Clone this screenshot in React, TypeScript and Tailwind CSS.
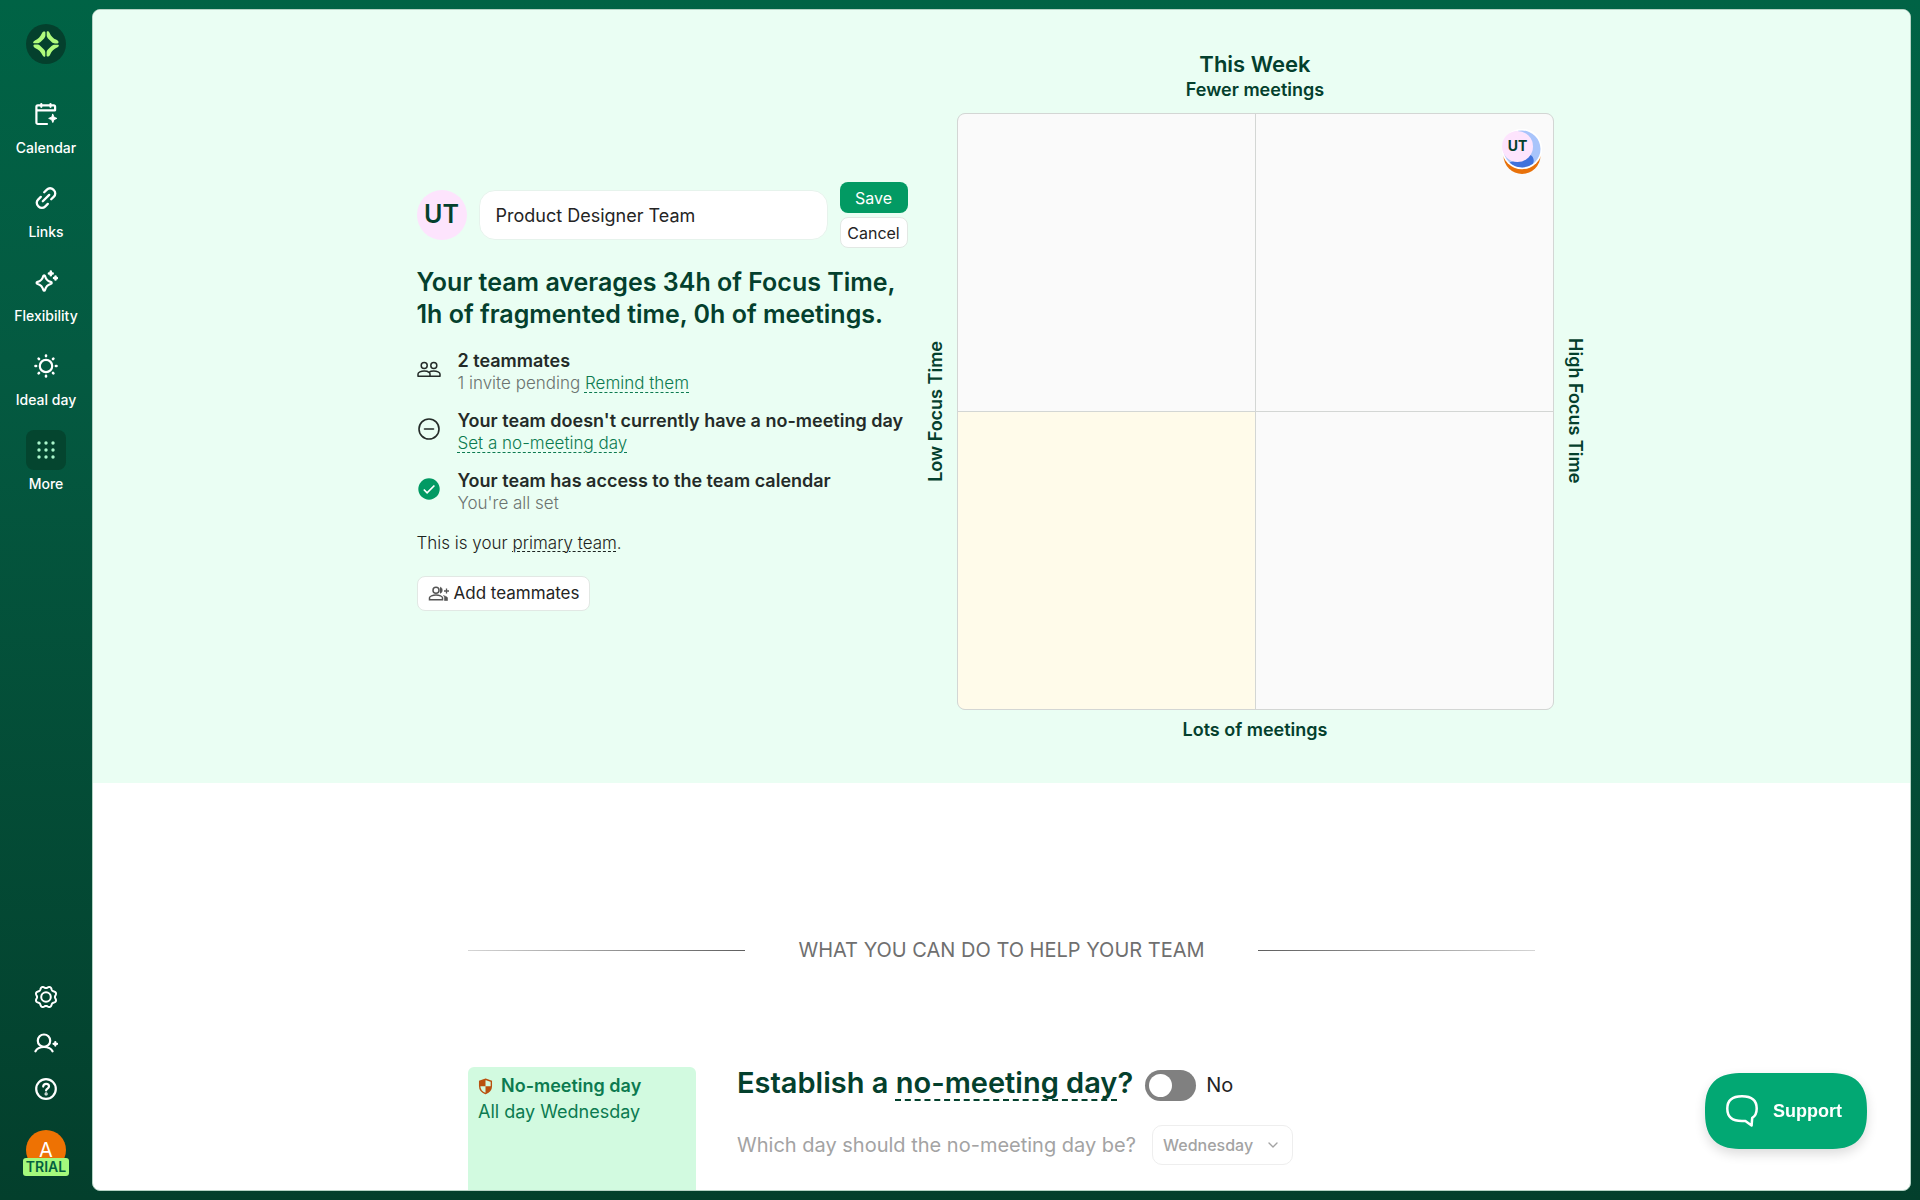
import { useState } from "react";
import { ChevronDown } from "lucide-react";

const navItems = [
  { label: "Calendar", icon: CalendarIcon },
  { label: "Links", icon: LinksIcon },
  { label: "Flexibility", icon: FlexibilityIcon },
  { label: "Ideal day", icon: SunIcon },
  { label: "More", icon: DotsIcon, active: true },
];

const days = ["Monday", "Tuesday", "Wednesday", "Thursday", "Friday"];

function Logo() {
  return (
    <svg viewBox="0 0 40 40" className="size-10">
      <circle cx="20" cy="20" r="20" fill="#04402d" />
      <g fill="#b0fb7c">
        {[0, 90, 180, 270].map((angle) => (
          <path
            key={angle}
            transform={`rotate(${angle} 20 20)`}
            d="M19.4 8.600v2.400c0 1.400-.3 2.300-1.300 3.400l-3.600 3.600c-1.100 1-2 1.300-3.400 1.300H8.400c-1 0-1.500-.5-1.100-1.300.3-.8.800-1.200 1.600-1.600 3.200-1.400 5.400-3.500 6.900-6.900.4-.9.900-1.500 1.800-1.900.9-.4 1.800 0 1.800 1z"
          />
        ))}
      </g>
    </svg>
  );
}

function CalendarIcon() {
  return (
    <svg viewBox="0 0 24 24" className="size-6" fill="none" stroke="currentColor" strokeWidth="2.200" strokeLinecap="round" strokeLinejoin="round">
      <path d="M13 22H3.800a1.400 1.400 0 0 1-1.400-1.400V4.800a1.400 1.400 0 0 1 1.400-1.400h15.900a1.400 1.400 0 0 1 1.400 1.400V8.300H2.500M7.300 2v2.800M16.500 2v2.800" />
      <path d="M18.800 12.300l1.200 2.900 2.900 1.200-2.900 1.200-1.200 2.900-1.200-2.900-2.900-1.200 2.900-1.200z" fill="currentColor" strokeWidth="1" />
    </svg>
  );
}

function LinksIcon() {
  return (
    <svg viewBox="0 0 24 24" className="size-6" fill="none" stroke="currentColor" strokeWidth="2.300" strokeLinecap="round">
      <path d="M10.200 6.300l2.700-2.700a4.500 4.500 0 0 1 6.400 0l.6.600a4.500 4.500 0 0 1 0 6.400l-2.700 2.700" />
      <path d="M13.800 17.900l-2.700 2.700a4.500 4.500 0 0 1-6.400 0l-.6-.6a4.500 4.500 0 0 1 0-6.400l2.700-2.700" />
      <path d="M8.800 15.300l6.400-6.400" />
    </svg>
  );
}

function FlexibilityIcon() {
  return (
    <svg viewBox="0 0 24 24" className="size-6" fill="none" stroke="currentColor" strokeWidth="2.200" strokeLinejoin="round" strokeLinecap="round">
      <path d="M10.200 5.300c.5 0 .7.300.9.900.9 3.300 2.200 4.700 5.500 5.700 1.500.5 1.500 1.700 0 2.100-3.300 1-4.600 2.300-5.500 5.600-.4 1.500-1.400 1.500-1.900 0-.9-3.300-2.200-4.600-5.500-5.600-1.500-.4-1.500-1.600 0-2.100 3.300-1 4.600-2.400 5.500-5.700.200-.6.500-.9 1-.9z" />
      <path strokeWidth="2.500" d="M16.800 1.500v3.800M14.900 3.400h3.800M21.500 6.600v3M20 8.100h3" />
    </svg>
  );
}

function SunIcon() {
  return (
    <svg viewBox="0 0 24 24" className="size-6" fill="none" stroke="currentColor" strokeWidth="2.200" strokeLinecap="round">
      <circle cx="12" cy="12" r="6.200" />
      <path strokeWidth="2.600" d="M12 1.500v.6M12 21.900v.6M1.500 12h.6M21.900 12h.6M4.600 4.600l.4.400M19 19l.4.400M4.600 19.400l.4-.4M19 5l.4-.4" />
    </svg>
  );
}

function DotsIcon() {
  return (
    <svg viewBox="0 0 24 24" className="size-6 text-[#a9f5cb]" fill="currentColor">
      {[5, 12, 19].map((y) => [5, 12, 19].map((x) => <circle key={`${x}-${y}`} cx={x} cy={y} r="1.700" />))}
    </svg>
  );
}

// eight rounded teeth around a ring, with a notch at the top
const gearPoints = Array.from({ length: 96 }, (_, i) => {
  const angle = (i / 96) * Math.PI * 2;
  const radius = 9.800 - Math.cos(angle * 8) * 0.900;
  return `${(12 + Math.sin(angle) * radius).toFixed(2)},${(12 - Math.cos(angle) * radius).toFixed(2)}`;
}).join(" ");

function GearIcon() {
  return (
    <svg viewBox="0 0 24 24" className="size-6" fill="none" stroke="currentColor" strokeWidth="2" strokeLinejoin="round">
      <circle cx="12" cy="12" r="4.800" />
      <polygon points={gearPoints} />
    </svg>
  );
}

function InviteIcon() {
  return (
    <svg viewBox="0 0 24 24" className="size-6" fill="none" stroke="currentColor" strokeWidth="2.200" strokeLinecap="round">
      <circle cx="10" cy="9.700" r="6.200" />
      <path d="M1.500 20.300c1.200-2.500 4.500-4.300 8.500-4.300s7.300 1.800 8.500 4.300M21.300 11v3.600M19.500 12.800h3.600" />
    </svg>
  );
}

function HelpIcon() {
  return (
    <svg viewBox="0 0 24 24" className="size-6" fill="none" stroke="currentColor" strokeWidth="2.200" strokeLinecap="round">
      <circle cx="12" cy="12" r="9.800" />
      <path d="M9.200 9.600c0-1.600 1.200-2.700 2.900-2.700s2.900 1 2.900 2.500c0 2-2.900 2.200-2.900 4" />
      <circle cx="12.100" cy="16.900" r=".5" fill="currentColor" />
    </svg>
  );
}

function TeamIcon() {
  return (
    <svg viewBox="0 0 24 24" className="size-6" fill="none" stroke="#242b28" strokeWidth="1.500" strokeLinejoin="round">
      <circle cx="7.200" cy="8.500" r="3" />
      <circle cx="16.800" cy="8.500" r="3" />
      <path d="M1 19.200v-2.300c0-1.500 3-2.900 6.200-2.900 2 0 3.800.5 4.800 1.300 1-.8 2.800-1.300 4.800-1.300 3.200 0 6.200 1.400 6.200 2.900v2.300zM12 15.300c.7.500 1 1 1 1.600v2.300" />
    </svg>
  );
}

function MinusCircleIcon() {
  return (
    <svg viewBox="0 0 24 24" className="size-6" fill="none" stroke="#242b28" strokeWidth="1.600" strokeLinecap="round">
      <circle cx="12" cy="12" r="10" />
      <path d="M7.500 12h9" />
    </svg>
  );
}

function CheckCircleIcon() {
  return (
    <svg viewBox="0 0 24 24" className="size-6" fill="none">
      <circle cx="12" cy="12" r="10.700" fill="#029a63" />
      <path d="M6.800 12.500l3.300 3.300L17.400 8.500" stroke="#fff" strokeWidth="1.700" />
    </svg>
  );
}

function AddTeamIcon() {
  return (
    <svg viewBox="0 0 22 18" className="h-[18px] w-[22px]" fill="none" stroke="#555" strokeWidth="1.500">
      <circle cx="8" cy="5.200" r="3" />
      <path d="M1.500 14.800v-2c0-1.500 3.200-2.700 6.500-2.700s6.500 1.200 6.500 2.700v2z" />
      <path d="M12 2.200c3 0 3 6 0 6M15.500 10.500c1.500.6 3.500 1.200 4 2.300v2.700h-3v-2.700c0-.9-.3-1.600-1-2.300z" fill="#555" strokeWidth=".6" />
      <path d="M18.500 3.500v5M16 6h5" strokeWidth="1.300" />
    </svg>
  );
}

function ShieldIcon() {
  return (
    <svg viewBox="0 0 14 16" className="h-[17px] w-[15px]">
      <path d="M7 1.200l5.500 1.900v4.500c0 3.500-2.300 5.900-5.500 7.100-3.200-1.200-5.500-3.600-5.500-7.100V3.100z" fill="none" stroke="#b9500f" strokeWidth="1.300" />
      <path d="M7 1.200v6.600H1.500V3.100zM7 7.800h5.500c0 3.400-2.300 5.700-5.500 6.900z" fill="#b9500f" />
    </svg>
  );
}

function TeamBadge() {
  return (
    <svg viewBox="0 0 42 46" className="h-[46px] w-[42px]">
      <circle cx="21" cy="26.500" r="18.500" fill="#e8710a" />
      <circle cx="21" cy="20" r="20.200" fill="#fff" />
      <circle cx="21" cy="20" r="18.500" fill="#a8c4fb" />
      <path d="M8.500 33.500a18.500 18.500 0 0 0 23.500 1.300c1.500-3 .6-7.300-2.500-8.800z" fill="#3f72dc" />
      <circle cx="16.500" cy="17.500" r="15.500" fill="#fde4fd" />
      <text x="16.500" y="22" textAnchor="middle" fontSize="14" fontWeight="700" fill="#04402d">
        UT
      </text>
    </svg>
  );
}

function ChatIcon() {
  return (
    <svg viewBox="0 0 34 34" className="size-[34px]" fill="none" stroke="#fff" strokeWidth="2.500" strokeLinejoin="round">
      <path d="M17 2.200c9.800 0 14.700 3.500 14.700 12.300 0 4.700-1.300 7.600-4.500 9.300l-.6 7.800-6.200-4.500c-1.100-.2-2.200-.1-3.400-.1C7.200 27 2.300 23.200 2.300 14.500S7.200 2.200 17 2.200z" />
    </svg>
  );
}

function Sidebar() {
  return (
    <aside className="flex w-[92px] shrink-0 flex-col items-center text-white">
      <a href="#home" aria-label="Home" className="mt-6">
        <Logo />
      </a>
      <nav className="mt-[30px] flex flex-col items-center gap-5">
        {navItems.map((item) => (
          <a key={item.label} href="#nav" className="flex flex-col items-center gap-1 text-sm/5 font-medium">
            <span className={`flex size-10 items-center justify-center rounded-lg ${item.active ? "bg-[#04452f]" : ""}`}>
              <item.icon />
            </span>
            {item.label}
          </a>
        ))}
      </nav>
      <div className="mt-auto flex flex-col items-center gap-[22px]">
        <button type="button" aria-label="Settings"><GearIcon /></button>
        <button type="button" aria-label="Invite"><InviteIcon /></button>
        <button type="button" aria-label="Help"><HelpIcon /></button>
      </div>
      <button type="button" className="mt-[29px] mb-6 flex flex-col items-center">
        <span className="flex size-10 items-center justify-center rounded-full bg-[#ee7203] text-xl">A</span>
        <span className="-mt-3 rounded-[3px] bg-[#a5f97c] px-[3px] text-sm/[18px] font-semibold text-[#04603f]">TRIAL</span>
      </button>
    </aside>
  );
}

const linkClass = "text-[#0c7a50] underline decoration-dashed decoration-1 underline-offset-3";

function TeamSummary() {
  const [name, setName] = useState("Product Designer Team");

  return (
    <div className="w-[491px]">
      <div className="flex items-center">
        <div className="flex size-[50px] shrink-0 items-center justify-center rounded-full bg-[#fde4fd] text-[25px] font-semibold text-[#04402d]">
          UT
        </div>
        <input
          aria-label="Team name"
          value={name}
          onChange={(e) => setName(e.target.value)}
          className="ml-3 h-[50px] min-w-0 flex-1 rounded-2xl border border-[#e6f3ec] bg-white px-4 text-lg text-[#242424]"
        />
        <div className="ml-3 flex w-[68px] flex-col gap-1 text-base">
          <button type="button" className="h-[31px] rounded-lg bg-[#029a63] text-white">Save</button>
          <button type="button" className="h-[31px] rounded-lg border border-[#e2e8e4] bg-white text-[#242424]">Cancel</button>
        </div>
      </div>

      <h1 className="mt-[18px] text-[25px]/8 font-semibold whitespace-nowrap text-[#04402d]">
        Your team averages 34h of Focus Time,
        <br />
        1h of fragmented time, 0h of meetings.
      </h1>

      <ul className="mt-5 flex flex-col gap-4 text-[17px]/[22px] font-light whitespace-nowrap text-[#6b736f]">
        <li className="flex items-center gap-[17px]">
          <span className="mb-1.5"><TeamIcon /></span>
          <div>
            <p className="text-lg/[22px] font-semibold text-[#242b28]">2 teammates</p>
            <p>1 invite pending <a href="#remind" className={linkClass}>Remind them</a></p>
          </div>
        </li>
        <li className="flex items-center gap-[17px]">
          <span className="mb-1.5"><MinusCircleIcon /></span>
          <div>
            <p className="text-lg/[22px] font-semibold text-[#242b28]">Your team doesn't currently have a no-meeting day</p>
            <p><a href="#no-meeting-day" className={linkClass}>Set a no-meeting day</a></p>
          </div>
        </li>
        <li className="flex items-center gap-[17px]">
          <span className="mb-1.5"><CheckCircleIcon /></span>
          <div>
            <p className="text-lg/[22px] font-semibold text-[#242b28]">Your team has access to the team calendar</p>
            <p>You're all set</p>
          </div>
        </li>
      </ul>

      <p className="mt-[18px] text-[17px]/[22px] font-light text-[#1c2320]">
        This is your <span className="underline decoration-dashed decoration-1 underline-offset-2">primary team</span>.
      </p>
      <button type="button" className="mt-[22px] flex h-[35px] items-center gap-1 rounded-lg border border-[#e2e8e4] bg-white px-2.5 text-[17px] text-[#242424]">
        <AddTeamIcon />
        Add teammates
      </button>
    </div>
  );
}

function Quadrant() {
  return (
    <div className="grid grid-cols-[auto_597px_auto] items-center gap-x-[9px] pb-1 text-[#04402d]">
      <div className="col-start-2 mb-[13px] text-center font-semibold">
        <h2 className="text-[22px]/8">This Week</h2>
        <p className="text-lg/5">Fewer meetings</p>
      </div>
      <p className="col-start-1 rotate-180 text-lg/6 font-semibold [writing-mode:vertical-rl]">Low Focus Time</p>
      <div className="grid h-[597px] grid-cols-2 grid-rows-2 gap-px overflow-hidden rounded-lg border border-[#d3d6d4] bg-[#d3d6d4]">
        <div className="bg-[#fafafa]" />
        <div className="flex items-start justify-end bg-[#fafafa] pt-[15px] pr-2.5">
          <TeamBadge />
        </div>
        <div className="bg-[#fffbea]" />
        <div className="bg-[#fafafa]" />
      </div>
      <p className="text-lg/6 font-semibold [writing-mode:vertical-rl]">High Focus Time</p>
      <p className="col-start-2 mt-2 text-center text-lg/6 font-semibold">Lots of meetings</p>
    </div>
  );
}

function Suggestions() {
  const [enabled, setEnabled] = useState(false);
  const [day, setDay] = useState("Wednesday");

  return (
    <section className="mx-auto w-full max-w-[1067px] pt-[151px]">
      <div className="flex items-center gap-[53px]">
        <div className="h-px flex-1 bg-linear-to-r from-[#d5d5d5] to-[#5f5f5f]" />
        <h2 className="text-xl/8 text-[#6f6f6f]">WHAT YOU CAN DO TO HELP YOUR TEAM</h2>
        <div className="h-px flex-1 bg-linear-to-r from-[#5f5f5f] to-[#d5d5d5]" />
      </div>

      <div className="mt-[101px] flex gap-[41px]">
        <div className="h-60 w-[228px] rounded-md bg-[#d2fae0] px-2.5 py-1.5 text-lg/[26px] text-[#0c7a50]">
          <p className="flex items-center gap-2 font-semibold">
            <ShieldIcon />
            No-meeting day
          </p>
          <p>All day {day}</p>
        </div>
        <div>
          <div className="flex items-center">
            <h3 className="pb-1 text-[29px]/8 font-semibold text-[#04402d]">
              Establish a{" "}
              <span className="underline decoration-dashed decoration-2 underline-offset-6">no-meeting day</span>?
            </h3>
            <label className="ml-3 flex items-center gap-2.5 text-xl text-[#242424]">
              <input
                type="checkbox"
                role="switch"
                checked={enabled}
                onChange={(e) => setEnabled(e.target.checked)}
                className="flex h-[31px] w-[51px] appearance-none items-center rounded-full bg-[#808080] px-1 before:size-[23px] before:rounded-full before:bg-white checked:justify-end checked:bg-[#029a63]"
              />
              {enabled ? "Yes" : "No"}
            </label>
          </div>
          <div className="mt-[22px] flex items-center gap-4 text-xl text-[#a3a3a3]">
            <label htmlFor="day">Which day should the no-meeting day be?</label>
            <div className="relative">
              <select
                id="day"
                value={day}
                disabled={!enabled}
                onChange={(e) => setDay(e.target.value)}
                className="h-10 w-[141px] appearance-none rounded-[10px] border border-[#eeeeee] bg-white pl-2.5 text-base font-medium text-[#a3a3a3] opacity-100"
              >
                {days.map((d) => (
                  <option key={d}>{d}</option>
                ))}
              </select>
              <ChevronDown className="pointer-events-none absolute top-3 right-3 size-4" />
            </div>
          </div>
        </div>
      </div>
    </section>
  );
}

export default function App() {
  return (
    <div className="flex h-screen overflow-hidden bg-linear-to-b from-[#006345] via-[#045a41] via-30% to-[#033f2c] font-['Inter',sans-serif]">
      <Sidebar />
      <main className="my-[9px] mr-[9px] flex-1 overflow-hidden rounded-lg border border-[#b5d3c5] bg-white">
        <section className="flex h-[773px] items-center justify-center gap-4 bg-[#eafef3]">
          <TeamSummary />
          <Quadrant />
        </section>
        <Suggestions />
      </main>
      <button
        type="button"
        className="fixed right-[53px] bottom-[51px] flex h-[76px] w-[162px] items-center gap-3.5 rounded-[38px] bg-[#02a873] pl-5 font-['Liberation_Sans',sans-serif] text-lg font-bold text-white shadow-[0_5px_12px_rgba(0,0,0,0.14)] [corner-shape:superellipse(1.4)]"
      >
        <ChatIcon />
        Support
      </button>
    </div>
  );
}
